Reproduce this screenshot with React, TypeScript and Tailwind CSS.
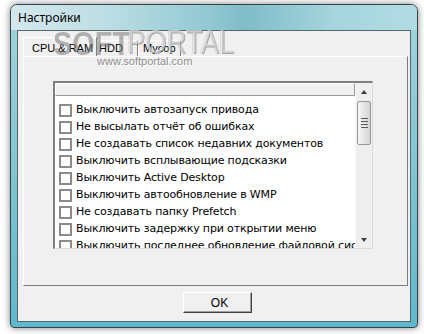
import React from 'react';

const items = [
  'Выключить автозапуск привода',
  'Не высылать отчёт об ошибках',
  'Не создавать список недавних документов',
  'Выключить всплывающие подсказки',
  'Выключить Active Desktop',
  'Выключить автообновление в WMP',
  'Не создавать папку Prefetch',
  'Выключить задержку при открытии меню',
  'Выключить последнее обновление файловой системы',
];

const ListRow = ({ label }: { label: string }) => (
  <div className="h-[17px] flex items-center shrink-0">
    <span className="ml-[4px] w-[13px] h-[13px] border-2 border-[#8b8b8b] bg-white shrink-0" />
    <span className="ml-[4px] whitespace-nowrap tracking-[-0.15px]">{label}</span>
  </div>
);

const Scrollbar = () => (
  <div className="w-[17px] flex flex-col bg-[#efefef] border-l border-[#f7f7f7]">
    {/* up arrow */}
    <div className="h-[17px] flex items-center justify-center">
      <span className="w-0 h-0 border-x-[3px] border-x-transparent border-b-[4px] border-b-[#3c3c3c]" />
    </div>
    {/* thumb */}
    <div className="mt-[1px] mx-[1px] h-[44px] rounded-[2px] border border-[#979797] bg-[linear-gradient(90deg,#f6f6f6,#e2e2e2_60%,#d2d2d2)] flex flex-col items-center justify-center gap-[2px]">
      <span className="w-[7px] h-px bg-[#5a5a5a]" />
      <span className="w-[7px] h-px bg-[#5a5a5a]" />
      <span className="w-[7px] h-px bg-[#5a5a5a]" />
      <span className="w-[7px] h-px bg-[#5a5a5a]" />
    </div>
    <div className="flex-1" />
    {/* down arrow */}
    <div className="h-[17px] flex items-center justify-center">
      <span className="w-0 h-0 border-x-[3px] border-x-transparent border-t-[4px] border-t-[#3c3c3c]" />
    </div>
  </div>
);

export default function App() {
  return (
    <div className="relative w-[424px] h-[334px] overflow-hidden bg-white pt-[4px] pl-[10px]">
      {/* window frame */}
      <div className="w-[408px] h-[324px] flex flex-col rounded-t-[7px] rounded-b-[4px] border border-[#33454b] overflow-hidden bg-[linear-gradient(180deg,#a5d3dc,#7cc2d0_60%,#5fb8cc)] shadow-[0_0_7px_rgba(0,0,0,0.5)]">
        {/* title bar */}
        <div className="h-[25px] shrink-0 flex items-center pl-[7px] bg-[linear-gradient(90deg,#d3e8ec_0%,#bfdfe5_22%,#93c9d3_48%,#7fbdc9_58%,#a6d5dd_80%,#b2dce3_100%)]">
          <span className="text-[12px] text-black font-['Noto_Sans',sans-serif] leading-none">Настройки</span>
        </div>

        {/* client area */}
        <div className="flex-1 mx-[6px] mb-[5px] border border-[#56676c] bg-[#f0f0f0] flex flex-col pl-[5px] pt-[6px] font-['DejaVu_Sans',sans-serif] text-[11px] text-black">
          {/* tab strip */}
          <div className="h-[19px] flex items-end font-['Liberation_Sans',sans-serif] text-[11px]">
            <div className="w-[74px] h-[19px] border-t border-l border-white border-r border-r-[#808080] pl-[8px] pt-[5px] leading-none whitespace-nowrap">
              CPU &amp; RAM
            </div>
            <div className="w-[41px] h-[16px] border-t border-white border-r border-r-[#808080] pl-[2px] pt-[2px] leading-none">
              HDD
            </div>
            <div className="w-[43px] h-[16px] border-t border-l border-white border-r border-r-[#808080] pl-[4px] pt-[2px] leading-none">
              Мусор
            </div>
          </div>

          {/* tab page */}
          <div className="w-[385px] h-[230px] border-t border-l border-white border-r border-b border-r-[#7a7a7a] border-b-[#7a7a7a] pl-[29px] pt-[24px]">
            {/* list view */}
            <div className="w-[320px] h-[168px] flex border-t-2 border-l-2 border-t-[#7f7f7f] border-l-[#7f7f7f] border-r border-b border-r-[#dadada] border-b-[#dadada] bg-white">
              <div className="flex-1 flex flex-col overflow-hidden">
                <div className="h-[13px] shrink-0 bg-[#f0f0f0] border-t border-l border-white border-r border-b border-r-[#9a9a9a] border-b-[#9a9a9a]" />
                <div className="pt-[6px] flex flex-col">
                  {items.map((it) => (
                    <ListRow key={it} label={it} />
                  ))}
                </div>
              </div>
              <Scrollbar />
            </div>
          </div>

          {/* OK button */}
          <button className="mt-[6px] ml-[160px] w-[69px] h-[21px] bg-[#f0f0f0] border border-t-white border-l-white border-r-[#404040] border-b-[#404040] shadow-[inset_-1px_-1px_0_#a0a0a0] flex items-center justify-center pl-[4px] leading-none font-['Liberation_Sans',sans-serif] text-[12px]">
            OK
          </button>
        </div>
      </div>

      {/* softportal watermark, semi-transparent over the tabs */}
      <div className="absolute left-[53px] top-[26px] text-[34px] font-bold leading-none font-['Liberation_Sans',sans-serif] text-transparent bg-[radial-gradient(circle,rgba(120,120,120,0.55)_0.7px,transparent_1px)] bg-[length:2px_2px] bg-clip-text origin-left scale-x-[0.85] pointer-events-none">
        SOFT
      </div>
      <div className="absolute left-[127px] top-[25px] text-[33px] leading-none font-['Liberation_Sans',sans-serif] text-[rgba(255,255,255,0.45)] [text-shadow:1px_1px_0_rgba(110,110,110,0.55),-1px_0_0_rgba(180,180,180,0.4)] origin-left scale-x-[0.83] pointer-events-none">
        PORTAL
      </div>
      <div className="absolute left-[97px] top-[56px] text-[11px] leading-none font-['Liberation_Sans',sans-serif] text-[#8e8e8e] [text-shadow:1px_1px_0_#ffffff] pointer-events-none">
        www.softportal.com
      </div>
    </div>
  );
}
